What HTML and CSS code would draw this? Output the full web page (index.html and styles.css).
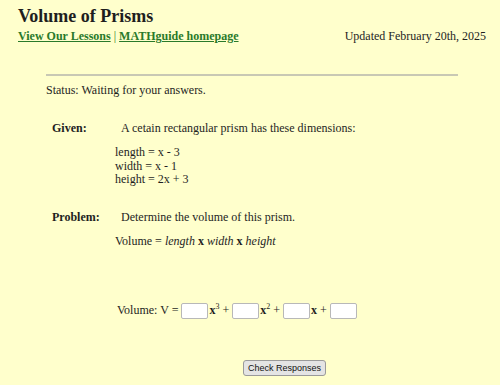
FILE: index.html
```html
<!DOCTYPE html>
<html>
<head>
<meta charset="utf-8">
<link rel="stylesheet" href="styles.css">
</head>
<body>
<header class="header">
  <h1 class="title">Volume of Prisms</h1>
  <div class="subbar">
    <div class="links"><a href="#">View Our Lessons</a> | <a href="#">MATHguide homepage</a></div>
    <div class="updated">Updated February 20th, 2025</div>
  </div>
</header>
<main class="main">
  <hr class="rule">
  <p class="status">Status: Waiting for your answers.</p>
  <section class="block given">
    <div class="label">Given:</div>
    <div class="text">A cetain rectangular prism has these dimensions:</div>
    <div class="detail">length = x - 3<br>width = x - 1<br>height = 2x + 3</div>
  </section>
  <section class="block problem">
    <div class="label">Problem:</div>
    <div class="text">Determine the volume of this prism.</div>
    <div class="detail">Volume = <i>length</i> <b>x</b> <i>width</i> <b>x</b> <i>height</i></div>
  </section>
  <div class="answer">
    Volume: V = <input class="box" type="text"><b>x</b><sup>3</sup> + <input class="box" type="text"><b>x</b><sup>2</sup> + <input class="box" type="text"><b>x</b> + <input class="box" type="text">
  </div>
  <div class="actions"><button class="check">Check Responses</button></div>
</main>
</body>
</html>
```
FILE: styles.css
```css
html, body {
  margin: 0;
  padding: 0;
  background: #ffffcc;
}
body {
  font-family: "Liberation Serif", "Times New Roman", serif;
  font-size: 12px;
  color: #1e1e1e;
  width: 500px;
  height: 385px;
  overflow: hidden;
}
.header {
  padding: 5px 14px 0 18px;
}
.title {
  margin: 0;
  font-size: 18px;
  line-height: 22px;
  font-weight: bold;
}
.subbar {
  display: flex;
  justify-content: space-between;
  margin-top: 2px;
  line-height: 15px;
}
.links a {
  color: #2a7a2a;
  font-weight: bold;
}
.links {
  color: #2a7a2a;
}
.main {
  margin: 0 42px 0 46px;
}
.rule {
  margin: 30px 0 0 0;
  border: 0;
  border-top: 2px solid #c8c8b4;
}
.status {
  margin: 7px 0 0 0;
  line-height: 15px;
}
.block {
  display: grid;
  grid-template-columns: 69px 1fr;
  margin-left: 6px;
}
.given { margin-top: 23px; }
.problem { margin-top: 23px; }
.label {
  font-weight: bold;
  line-height: 15px;
}
.text {
  line-height: 15px;
}
.detail {
  grid-column: 2;
  margin-left: -6px;
  margin-top: 10px;
  line-height: 13.5px;
}
.answer {
  margin: 52px 0 0 71px;
  line-height: 20px;
}
.box {
  box-sizing: border-box;
  width: 27px;
  height: 16px;
  padding: 1px;
  border: 1px solid #b8b8b8;
  border-radius: 2px;
  background: #fff;
  vertical-align: middle;
  margin: 0 1px 0 0;
}
sup {
  font-size: 8px;
  line-height: 0;
}
.actions {
  display: flex;
  margin: 40px 0 0 197px;
}
.check {
  font-family: "Liberation Sans", Arial, sans-serif;
  font-size: 9px;
  height: 16px;
  padding: 0 4px;
  border: 1px solid #9a9a9a;
  border-radius: 3px;
  background: #e4e4e4;
  color: #111;
}
```
